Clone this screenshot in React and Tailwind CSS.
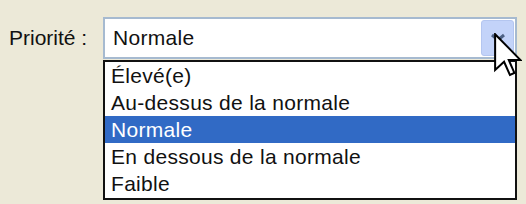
import React from "react";

const font = { fontFamily: '"Liberation Sans", Arial, sans-serif' };

function Cursor() {
  return (
    <svg
      className="absolute left-[494px] top-[33px]"
      width="28"
      height="45"
      viewBox="-0.5 -0.5 12.5 20"
    >
      <polygon
        points="0,0 0,16 4,12.3 6.6,18.2 8.6,17.3 6.1,11.5 11.3,11.5"
        fill="#ffffff"
        stroke="#000000"
        strokeWidth="0.9"
        strokeLinejoin="miter"
      />
    </svg>
  );
}

const items = [
  "Élevé(e)",
  "Au-dessus de la normale",
  "Normale",
  "En dessous de la normale",
  "Faible",
];

export default function App() {
  return (
    <div
      className="relative w-[526px] h-[204px] bg-[#ece9d8] overflow-hidden text-black"
      style={font}
    >
      <div className="flex pt-[17px]">
        <div className="w-[103px] pl-[9px] h-[42px] flex items-center text-[21px] text-[#111]">
          Priorité :
        </div>
        <div className="flex flex-col w-[414px]">
          <div className="h-[42px] border-2 border-[#a6bad0] bg-white flex items-center">
            <span className="flex-1 pl-[8px] text-[21px] tracking-[0.3px] text-[#111]">Normale</span>
            <div className="w-[33px] h-[36px] mr-[1px] rounded-[3px] bg-[#c3d3f9] border border-[#b4c6f0] flex items-center justify-center">
              <svg width="16" height="10" viewBox="0 0 16 10">
                <path d="M2 2 L8 7 L14 2" fill="none" stroke="#4d6185" strokeWidth="3" />
              </svg>
            </div>
          </div>
          <div className="mt-[1px] h-[140px] border-2 border-[#111] bg-white flex flex-col">
            {items.map((t) => (
              <div
                key={t}
                className={
                  t === "Normale"
                    ? "h-[27px] flex items-center pl-[6px] text-[21px] tracking-[0.3px] bg-[#316ac5] text-white"
                    : "h-[27px] flex items-center pl-[6px] text-[21px] tracking-[0.3px] text-[#111]"
                }
              >
                {t}
              </div>
            ))}
          </div>
        </div>
      </div>
      <Cursor />
    </div>
  );
}
